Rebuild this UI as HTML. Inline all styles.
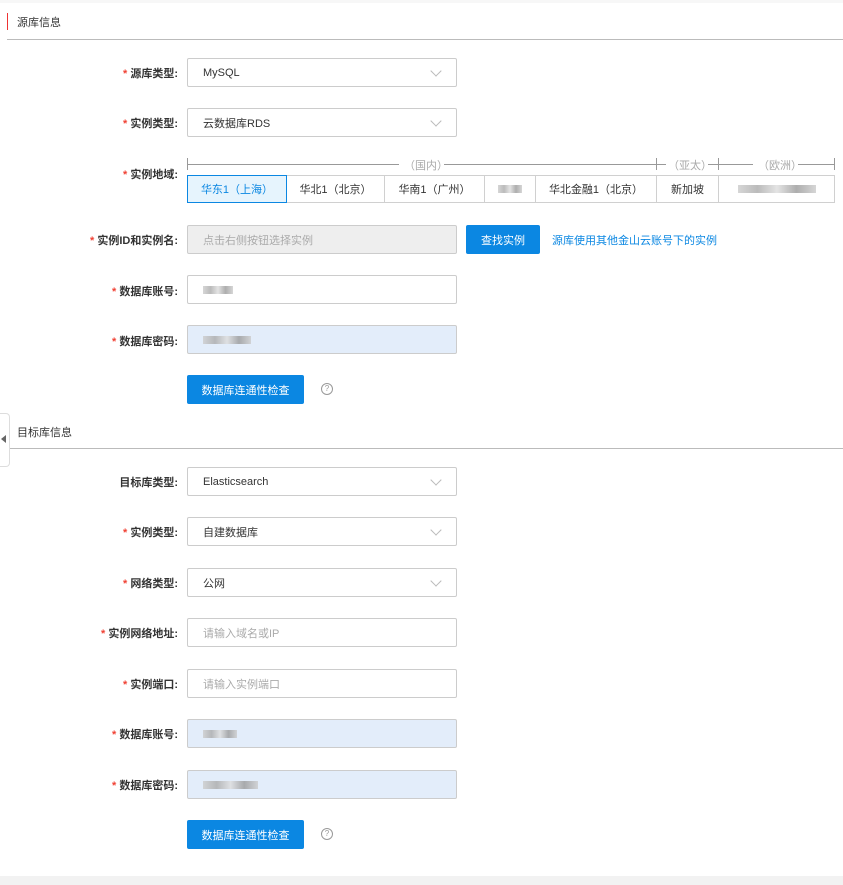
<!DOCTYPE html>
<html><head><meta charset="utf-8"><style>
*{box-sizing:border-box;margin:0;padding:0}
body{width:843px;height:885px;background:#fff;font-family:"Liberation Sans","Noto Sans CJK SC",sans-serif;font-size:11px;color:#333;position:relative;overflow:hidden}
.a{position:absolute}
.lbl{position:absolute;right:665px;font-weight:bold;color:#333;font-size:11px;white-space:nowrap}
.lbl i{color:#f04134;font-style:normal;margin-right:3px}
.inp{position:absolute;left:187px;width:270px;height:29px;border:1px solid #ccc;border-radius:2px;padding-left:15px;display:flex;align-items:center;font-size:11px;color:#333}
.sel:after{content:"";position:absolute;right:16px;top:8px;width:7px;height:7px;border-right:1px solid #bbb;border-bottom:1px solid #bbb;transform:rotate(45deg)}
.ph{color:#aaa}
.blue{background:#e3edfa}
.btn{position:absolute;left:187px;width:117px;height:29px;background:#0b87e2;color:#fff;border-radius:2px;display:flex;align-items:center;justify-content:center;font-size:11px}
.q{position:absolute;left:321px;width:12px;height:12px;border:1px solid #999;border-radius:50%;font-size:8px;color:#999;text-align:center;line-height:10px}
.cell{position:absolute;top:175px;height:28px;border:1px solid #d0d0d0;border-left:none;display:flex;align-items:center;justify-content:center;font-size:11px;color:#333}
.blur{display:inline-block;height:8px;background:linear-gradient(90deg,#ccc,#aaa,#ddd,#999,#ccc);vertical-align:middle;opacity:.8}
</style></head><body>
<div class="a" style="left:0;top:0;width:843px;height:3px;background:#f7f7f7"></div>
<div class="a" style="left:7px;top:13px;width:1px;height:17px;background:#e33"></div>
<div class="a" style="left:17px;top:14px;font-size:11px">源库信息</div>
<div class="a" style="left:7px;top:39px;width:836px;height:1px;background:#bbb"></div>

<div class="lbl" style="top:65px"><i>*</i>源库类型:</div>
<div class="inp sel" style="top:58px">MySQL</div>
<div class="lbl" style="top:115px"><i>*</i>实例类型:</div>
<div class="inp sel" style="top:108px">云数据库RDS</div>
<div class="lbl" style="top:166px"><i>*</i>实例地域:</div>

<div class="a" style="left:187px;top:158px;width:1px;height:12px;background:#999"></div>
<div class="a" style="left:187px;top:164px;width:212px;height:1px;background:#999"></div>
<div class="a" style="left:404px;top:157px;color:#aaa;font-size:11px">（国内）</div>
<div class="a" style="left:444px;top:164px;width:212px;height:1px;background:#999"></div>
<div class="a" style="left:656px;top:158px;width:1px;height:12px;background:#999"></div>
<div class="a" style="left:656px;top:164px;width:10px;height:1px;background:#999"></div>
<div class="a" style="left:668px;top:157px;color:#aaa">（亚太）</div>
<div class="a" style="left:708px;top:164px;width:10px;height:1px;background:#999"></div>
<div class="a" style="left:718px;top:158px;width:1px;height:12px;background:#999"></div>
<div class="a" style="left:718px;top:164px;width:35px;height:1px;background:#999"></div>
<div class="a" style="left:758px;top:157px;color:#aaa">（欧洲）</div>
<div class="a" style="left:798px;top:164px;width:36px;height:1px;background:#999"></div>
<div class="a" style="left:834px;top:158px;width:1px;height:12px;background:#999"></div>

<div class="cell" style="left:187px;width:100px;border:1px solid #0b87e2;background:#e6f4fd;color:#0b87e2">华东1（上海）</div>
<div class="cell" style="left:287px;width:98px">华北1（北京）</div>
<div class="cell" style="left:385px;width:100px">华南1（广州）</div>
<div class="cell" style="left:485px;width:51px"><span class="blur" style="width:24px"></span></div>
<div class="cell" style="left:536px;width:121px">华北金融1（北京）</div>
<div class="cell" style="left:657px;width:62px">新加坡</div>
<div class="cell" style="left:719px;width:116px"><span class="blur" style="width:78px"></span></div>

<div class="lbl" style="top:232px"><i>*</i>实例ID和实例名:</div>
<div class="inp ph" style="top:225px;background:#eee">点击右侧按钮选择实例</div>
<div class="a" style="left:466px;top:225px;width:74px;height:29px;background:#0b87e2;color:#fff;border-radius:2px;display:flex;align-items:center;justify-content:center">查找实例</div>
<div class="a" style="left:552px;top:232px;color:#0b87e2">源库使用其他金山云账号下的实例</div>

<div class="lbl" style="top:283px"><i>*</i>数据库账号:</div>
<div class="inp" style="top:275px"><span class="blur" style="width:30px"></span></div>
<div class="lbl" style="top:333px"><i>*</i>数据库密码:</div>
<div class="inp blue" style="top:325px"><span class="blur" style="width:48px"></span></div>
<div class="btn" style="top:375px">数据库连通性检查</div>
<div class="q" style="top:383px">?</div>

<div class="a" style="left:0;top:413px;width:10px;height:54px;border:1px solid #ddd;border-left:none;border-radius:0 4px 4px 0;background:#fff"></div>
<div class="a" style="left:1px;top:435px;width:0;height:0;border-top:4px solid transparent;border-bottom:4px solid transparent;border-right:5px solid #666"></div>
<div class="a" style="left:17px;top:424px">目标库信息</div>
<div class="a" style="left:10px;top:448px;width:833px;height:1px;background:#bbb"></div>

<div class="lbl" style="top:474px">目标库类型:</div>
<div class="inp sel" style="top:467px">Elasticsearch</div>
<div class="lbl" style="top:524px"><i>*</i>实例类型:</div>
<div class="inp sel" style="top:517px">自建数据库</div>
<div class="lbl" style="top:575px"><i>*</i>网络类型:</div>
<div class="inp sel" style="top:568px">公网</div>
<div class="lbl" style="top:625px"><i>*</i>实例网络地址:</div>
<div class="inp ph" style="top:618px">请输入域名或IP</div>
<div class="lbl" style="top:676px"><i>*</i>实例端口:</div>
<div class="inp ph" style="top:669px">请输入实例端口</div>
<div class="lbl" style="top:726px"><i>*</i>数据库账号:</div>
<div class="inp blue" style="top:719px"><span class="blur" style="width:34px"></span></div>
<div class="lbl" style="top:777px"><i>*</i>数据库密码:</div>
<div class="inp blue" style="top:770px"><span class="blur" style="width:55px"></span></div>
<div class="btn" style="top:820px">数据库连通性检查</div>
<div class="q" style="top:828px">?</div>
<div class="a" style="left:0;top:876px;width:843px;height:9px;background:#f2f2f2"></div>
</body></html>
